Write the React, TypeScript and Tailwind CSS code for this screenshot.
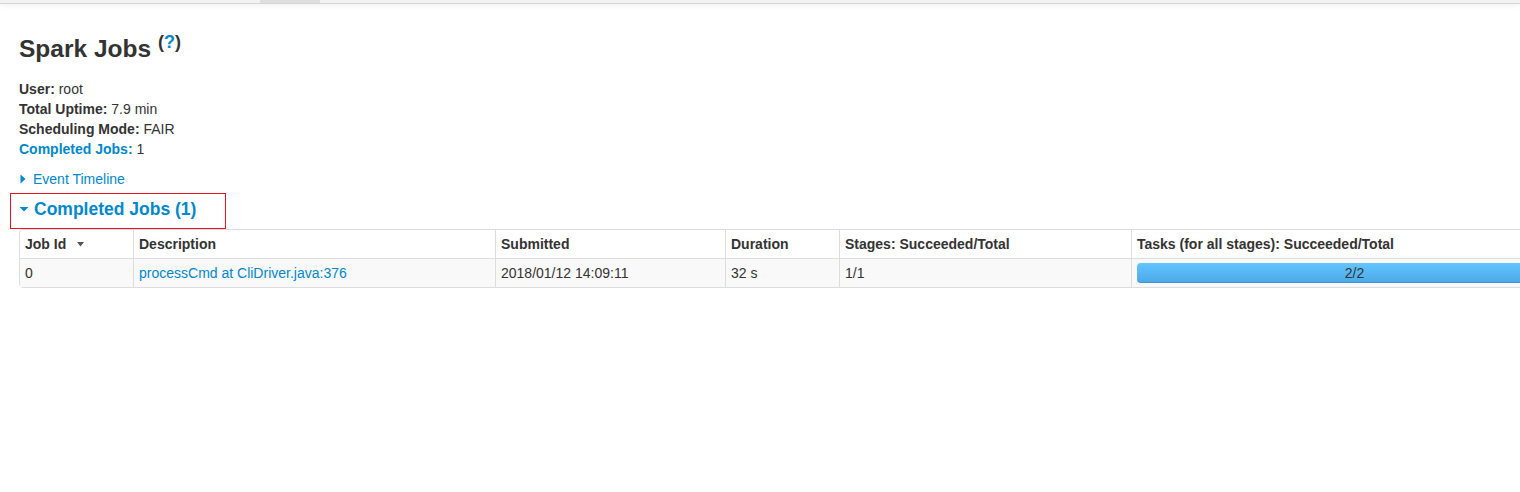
const FONT = { fontFamily: '"Liberation Sans", Arial, Helvetica, sans-serif' };

function Caret({ open }: { open?: boolean }) {
  return open ? (
    <svg width="10" height="10" viewBox="0 0 10 10" className="shrink-0">
      <path d="M0.5 3 L9.5 3 L5 7.5 Z" fill="#0088cc" />
    </svg>
  ) : (
    <svg width="8" height="10" viewBox="0 0 8 10" className="shrink-0">
      <path d="M1.5 0.5 L6.5 5 L1.5 9.5 Z" fill="#0088cc" />
    </svg>
  );
}

const cols = [
  { name: "Job Id", w: "w-[113px]", sort: true },
  { name: "Description", w: "w-[362px]" },
  { name: "Submitted", w: "w-[230px]" },
  { name: "Duration", w: "w-[114px]" },
  { name: "Stages: Succeeded/Total", w: "w-[292px]" },
  { name: "Tasks (for all stages): Succeeded/Total", w: "w-[446px]" },
];

export default function App() {
  return (
    <div className="w-[1520px] h-[492px] overflow-hidden bg-white text-[14px] leading-5 text-[#333]" style={FONT}>
      {/* navbar remnant */}
      <div className="h-[4px] bg-[#f2f2f2] border-b border-[#d4d4d4] shadow-[0_1px_6px_rgba(0,0,0,0.08)] flex">
        <div className="ml-[260px] w-[60px] bg-[#dedede]" />
      </div>

      <div className="pl-[19px]">
        <h3 className="mt-[23px] h-10 relative top-[2px] text-[24.5px] font-bold leading-10 text-[#333]">
          Spark Jobs{" "}
          <sup className="text-[18px] font-bold relative top-[-9px]">
            (<span className="text-[#0088cc]">?</span>)
          </sup>
        </h3>

        <ul className="mt-[12px]">
          <li>
            <strong>User:</strong> root
          </li>
          <li>
            <strong>Total Uptime:</strong> 7.9 min
          </li>
          <li>
            <strong>Scheduling Mode:</strong> FAIR
          </li>
          <li>
            <strong className="text-[#0088cc]">Completed Jobs:</strong> 1
          </li>
        </ul>

        <div className="mt-[10px] flex items-center gap-[6px] text-[#0088cc]">
          <Caret />
          <span>Event Timeline</span>
        </div>

        <div className="mt-[4px] -ml-[9px] w-[216px] h-[36px] border border-[#e8141b] flex items-start pt-[5px] pl-[8px]">
          <span className="h-5 flex items-center">
            <Caret open />
          </span>
          <h4 className="ml-[5px] text-[17.5px] font-bold leading-5 text-[#0088cc]">Completed Jobs (1)</h4>
        </div>

        <table className="w-[1557px] table-fixed border-separate border-spacing-0 border border-[#dddddd] rounded-[4px]">
          <thead>
            <tr>
              {cols.map((c, i) => (
                <th
                  key={c.name}
                  className={`${c.w} h-[28px] text-left font-bold px-[5px] py-[4px] leading-5 ${i > 0 ? "border-l border-[#dddddd]" : ""}`}
                >
                  <span className="inline-flex items-center">
                    {c.name}
                    {c.sort && (
                      <svg width="7" height="5" viewBox="0 0 7 5" className="ml-[11px]">
                        <path d="M0 0 L7 0 L3.5 4.5 Z" fill="#555" />
                      </svg>
                    )}
                  </span>
                </th>
              ))}
            </tr>
          </thead>
          <tbody>
            <tr className="bg-[#f9f9f9]">
              <td className="px-[5px] py-[4px] border-t border-[#dddddd]">0</td>
              <td className="px-[5px] py-[4px] border-t border-l border-[#dddddd] text-[#0088cc]">
                processCmd at CliDriver.java:376
              </td>
              <td className="px-[5px] py-[4px] border-t border-l border-[#dddddd]">2018/01/12 14:09:11</td>
              <td className="px-[5px] py-[4px] border-t border-l border-[#dddddd]">32 s</td>
              <td className="px-[5px] py-[4px] border-t border-l border-[#dddddd]">1/1</td>
              <td className="px-[5px] py-[4px] border-t border-l border-[#dddddd]">
                <div className="h-[20px] rounded-[4px] bg-gradient-to-b from-[#62c6ff] to-[#4ca9e8] border-b border-[#3f93cf] flex items-center justify-center text-[#333] text-[14px] leading-5">
                  2/2
                </div>
              </td>
            </tr>
          </tbody>
        </table>
      </div>
    </div>
  );
}
